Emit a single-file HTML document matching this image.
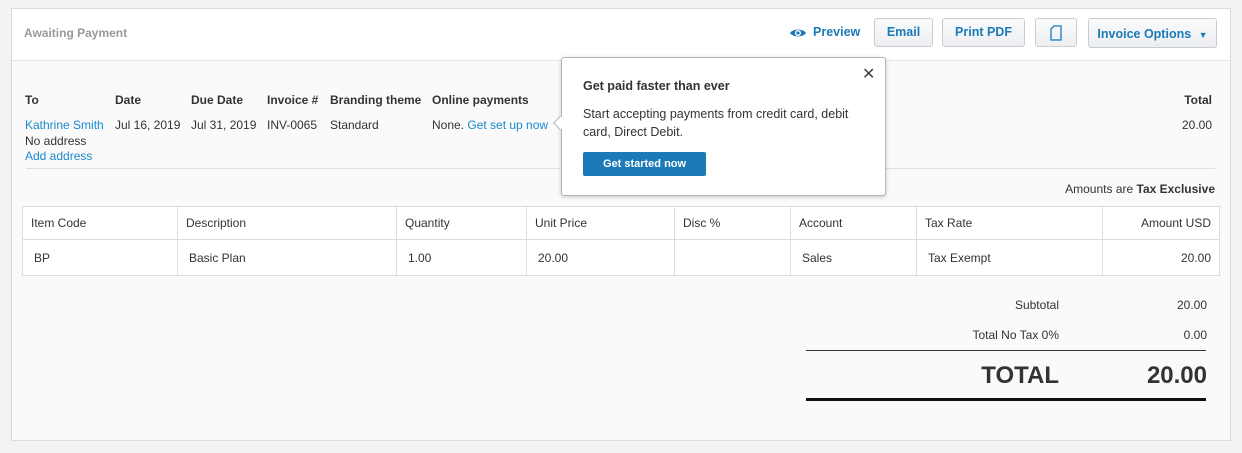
<!DOCTYPE html>
<html><head><style>
*{box-sizing:border-box;margin:0;padding:0}
body{width:1242px;height:453px;background:#f3f3f3;font-family:"Liberation Sans",Arial,sans-serif;font-size:12px;color:#333;position:relative;overflow:hidden}
.abs{position:absolute}
.card{left:11px;top:8px;width:1220px;height:433px;border:1px solid #dcdcdc;background:#fafafa}
.hdr{left:12px;top:9px;width:1218px;height:52px;background:#fff;border-bottom:1px solid #e6e6e6}
.btn{position:absolute;top:18px;height:29px;border:1px solid #c9cdd1;border-radius:3px;background:linear-gradient(#fafbfc,#eceef0);color:#1c7ab8;font-weight:bold;font-size:12.5px;text-align:center;line-height:27px}
.b{font-weight:bold}
.lnk{color:#1a8ad0}
.r{text-align:right}
table{position:absolute;left:22px;top:206px;width:1198px;border-collapse:collapse;background:#fff}
td{border:1px solid #dcdcdc;padding:0 8px;font-size:12px}
tr.h td{height:33px}
tr.rw td{height:36px;padding-left:11px}
.pop{left:561px;top:57px;width:325px;height:139px;background:#fff;border:1px solid #b5b5b5;border-radius:3px;box-shadow:0 1px 4px rgba(0,0,0,.2)}
</style></head><body>
<div class="abs card"></div>
<div class="abs hdr"></div>
<div class="abs b" style="left:24px;top:26px;color:#9a9a9a;font-size:12px">Awaiting Payment</div>
<svg class="abs" style="left:789px;top:27px" width="18" height="12" viewBox="0 0 18 12"><path d="M1 6C3.5 1.5 14.5 1.5 17 6C14.5 10.5 3.5 10.5 1 6Z" fill="#1c7ab8"/><circle cx="9" cy="6" r="3" fill="#fff"/><circle cx="9" cy="6" r="1.6" fill="#1c7ab8"/></svg>
<div class="abs b" style="left:813px;top:25px;color:#1c7ab8;font-size:12.5px">Preview</div>
<div class="btn" style="left:874px;width:59px">Email</div>
<div class="btn" style="left:942px;width:83px">Print PDF</div>
<div class="btn" style="left:1035px;width:42px"><svg width="12" height="16" viewBox="0 0 12 16" style="margin-top:6px"><path d="M4 1H11V15H1V4Z" fill="none" stroke="#1c7ab8" stroke-width="1.3"/></svg></div>
<div class="btn" style="left:1088px;width:129px;top:18px;height:30px;line-height:30px">Invoice Options <span style="font-size:9px;margin-left:4px">▼</span></div>

<div class="abs b" style="left:25px;top:93px">To</div>
<div class="abs b" style="left:115px;top:93px">Date</div>
<div class="abs b" style="left:191px;top:93px">Due Date</div>
<div class="abs b" style="left:267px;top:93px">Invoice #</div>
<div class="abs b" style="left:330px;top:93px">Branding theme</div>
<div class="abs b" style="left:432px;top:93px">Online payments</div>
<div class="abs b r" style="right:30px;top:93px">Total</div>
<div class="abs lnk" style="left:25px;top:118px">Kathrine Smith</div>
<div class="abs" style="left:25px;top:134px">No address</div>
<div class="abs lnk" style="left:25px;top:149px">Add address</div>
<div class="abs" style="left:115px;top:118px">Jul 16, 2019</div>
<div class="abs" style="left:191px;top:118px">Jul 31, 2019</div>
<div class="abs" style="left:267px;top:118px">INV-0065</div>
<div class="abs" style="left:330px;top:118px">Standard</div>
<div class="abs" style="left:432px;top:118px">None. <span class="lnk">Get set up now</span></div>
<div class="abs r" style="right:30px;top:118px">20.00</div>
<div class="abs" style="left:26px;top:168px;width:1189px;height:1px;background:#e0e0e0"></div>
<div class="abs r" style="right:27px;top:182px">Amounts are <span class="b">Tax Exclusive</span></div>

<table>
<tr class="h"><td style="width:155px">Item Code</td><td style="width:219px">Description</td><td style="width:130px">Quantity</td><td style="width:148px">Unit Price</td><td style="width:116px">Disc %</td><td style="width:126px">Account</td><td style="width:186px">Tax Rate</td><td style="text-align:right">Amount USD</td></tr>
<tr class="rw"><td>BP</td><td>Basic Plan</td><td>1.00</td><td>20.00</td><td></td><td>Sales</td><td>Tax Exempt</td><td style="text-align:right;padding-right:8px">20.00</td></tr>
</table>

<div class="abs r" style="right:183px;top:298px">Subtotal</div>
<div class="abs r" style="right:35px;top:298px">20.00</div>
<div class="abs r" style="right:183px;top:328px">Total No Tax 0%</div>
<div class="abs r" style="right:35px;top:328px">0.00</div>
<div class="abs" style="left:806px;top:350px;width:400px;height:1px;background:#333"></div>
<div class="abs b r" style="right:183px;top:362px;font-size:24px">TOTAL</div>
<div class="abs b r" style="right:35px;top:362px;font-size:24px">20.00</div>
<div class="abs" style="left:806px;top:398px;width:400px;height:3px;background:#111"></div>

<div class="abs pop"></div>
<div class="abs" style="left:555px;top:118px;width:10px;height:10px;background:#fff;border-left:1px solid #b5b5b5;border-bottom:1px solid #b5b5b5;transform:rotate(45deg)"></div>
<div class="abs b" style="left:583px;top:79px;font-size:12.5px">Get paid faster than ever</div>
<div class="abs" style="left:862px;top:64px;font-size:16px;color:#444">✕</div>
<div class="abs" style="left:583px;top:105px;width:290px;line-height:18px;font-size:12.5px">Start accepting payments from credit card, debit card, Direct Debit.</div>
<div class="abs b" style="left:583px;top:152px;width:123px;height:24px;background:#1c7ab8;color:#fff;font-size:11px;text-align:center;line-height:24px;border-radius:2px">Get started now</div>
</body></html>
